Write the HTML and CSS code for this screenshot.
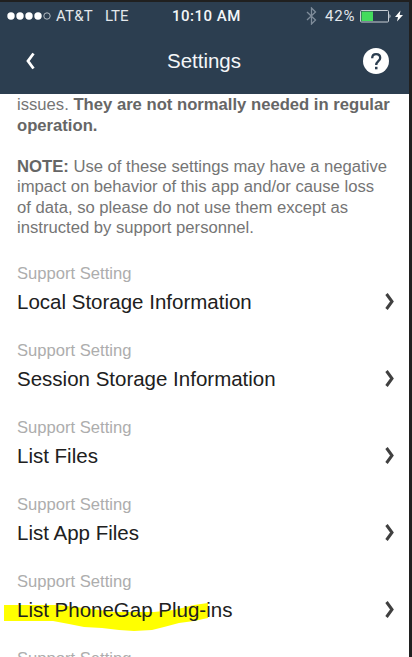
FILE: index.html
```html
<!DOCTYPE html>
<html lang="en">
<head>
<meta charset="utf-8">
<title>Settings</title>
<link rel="stylesheet" href="styles.css">
</head>
<body>
<div class="phone">
  <header class="header">
    <div class="status">
      <div class="carrier">
        <svg class="signal" width="44" height="8" viewBox="0 0 44 8"><g fill="#fff"><circle cx="4" cy="4" r="3.7"/><circle cx="13" cy="4" r="3.7"/><circle cx="22" cy="4" r="3.7"/><circle cx="31" cy="4" r="3.7"/></g><circle cx="40" cy="4" r="3.2" fill="none" stroke="#d5dae0" stroke-width=".8"/></svg>
        <span class="network">AT&amp;T</span><span class="lte">LTE</span>
      </div>
      <span class="time">10:10 AM</span>
      <div class="power">
        <svg class="bluetooth" width="11" height="18" viewBox="0 0 11 18" fill="none" stroke="#7f8c9a" stroke-width="1.3"><path d="M1 5l8.5 8L5.5 17V1l4 4L1 13"/></svg>
        <span class="percent">42%</span>
        <svg class="battery" width="44" height="14" viewBox="0 0 44 14"><rect x=".5" y="1.5" width="28" height="11.5" rx="1" fill="none" stroke="#c8ced5"/><path d="M1.5 2.5H13v9.5H1.5z" fill="#43dc5c"/><path d="M29.5 5q2 2.2 0 4.5z" fill="#d5dae0"/><path d="M40.5 1.5L35 8h3l-1 4.5L43 6h-3.3z" fill="#fff"/></svg>
      </div>
    </div>
    <nav class="nav">
      <svg class="back" width="11" height="18" viewBox="0 0 11 18"><path d="M9.5 1.5L4 9 9.5 16.5" fill="none" stroke="#fff" stroke-width="2.8"/></svg>
      <h1 class="title">Settings</h1>
      <svg class="help" width="26" height="26" viewBox="0 0 26 26"><circle cx="13" cy="13" r="13" fill="#fff"/><path d="M9.2 10.2C9.2 7.5 10.6 6.2 13.1 6.2s4.1 1.5 4.1 3.7c0 3.1-4 3.3-4 7" fill="none" stroke="#2c3e50" stroke-width="2.3"/><path d="M12 18.8h2.5V21.3H12z" fill="#2c3e50"/></svg>
    </nav>
  </header>
  <main class="content">
    <p class="copy">issues. <b>They are not normally needed in regular<br>operation.</b></p>
    <p class="copy"><b>NOTE:</b> Use of these settings may have a negative<br>impact on behavior of this app and/or cause loss<br>of data, so please do not use them except as<br>instructed by support personnel.</p>
    <ul class="list">
      <li class="item"><span class="label">Support Setting</span><div class="row"><span>Local Storage Information</span><svg class="chevron" width="10" height="17" viewBox="0 0 10 17"><path d="M1.5 1L7 8.5 1.5 16"/></svg></div></li>
      <li class="item"><span class="label">Support Setting</span><div class="row"><span>Session Storage Information</span><svg class="chevron" width="10" height="17" viewBox="0 0 10 17"><path d="M1.5 1L7 8.5 1.5 16"/></svg></div></li>
      <li class="item"><span class="label">Support Setting</span><div class="row"><span>List Files</span><svg class="chevron" width="10" height="17" viewBox="0 0 10 17"><path d="M1.5 1L7 8.5 1.5 16"/></svg></div></li>
      <li class="item"><span class="label">Support Setting</span><div class="row"><span>List App Files</span><svg class="chevron" width="10" height="17" viewBox="0 0 10 17"><path d="M1.5 1L7 8.5 1.5 16"/></svg></div></li>
      <li class="item marked"><svg class="marker" width="206" height="30" viewBox="0 0 206 30"><path d="M0 3H54L80 6 110 10H150L170 8 190 3 204 1V16L190 19 175 21 160 25 148 28 130 29 115 28 98 26 80 25 65 22 49 19H0z" fill="#ff0"/></svg><span class="label">Support Setting</span><div class="row"><span>List PhoneGap Plug-ins</span><svg class="chevron" width="10" height="17" viewBox="0 0 10 17"><path d="M1.5 1L7 8.5 1.5 16"/></svg></div></li>
      <li class="item"><span class="label">Support Setting</span></li>
    </ul>
  </main>
</div>
</body>
</html>
```
FILE: styles.css
```css
* { box-sizing: border-box; }
body {
  margin: 0;
  height: 657px;
  overflow: hidden;
  background: #202020;
  font-family: "Liberation Sans", Arial, sans-serif;
}
svg { display: block; flex: none; }
.phone {
  width: 409px;
  height: 657px;
  padding-top: 2px;
  overflow: hidden;
  background: #fff;
  background-clip: content-box;
}
.header {
  height: 92px;
  background: #2c3e50;
  color: #f4f6f8;
}
.status {
  display: grid;
  grid-template-columns: 172px 1fr 104px;
  height: 27px;
  align-items: center;
  font-family: Roboto, sans-serif;
  font-size: 15px;
  line-height: 18px;
}
.carrier { display: flex; align-items: center; padding-left: 7px; color: #e3e7eb; }
.network { margin-left: 5px; letter-spacing: .2px; }
.lte { margin-left: 12px; }
.time { font-weight: 500; letter-spacing: .5px; }
.power { display: flex; align-items: center; padding-left: 1px; color: #e3e7eb; }
.percent { margin-left: 8px; width: 35px; letter-spacing: .8px; }
.nav {
  display: flex;
  align-items: center;
  justify-content: space-between;
  height: 65px;
  padding: 0 20px 0 24px;
}
.nav > * { position: relative; top: -1px; }
.title { margin: 0; padding-left: 10px; font-size: 20.5px; font-weight: 400; line-height: 24px; }
.content { padding: 1px 14px 0 17px; }
.copy {
  margin: 0 0 20.5px;
  color: #757575;
  font-size: 16.65px;
  line-height: 20.6px;
  white-space: nowrap;
}
.copy b { color: #666; }
.list { margin: 0; padding: 2px 0 0; list-style: none; }
.item { position: relative; height: 77px; }
.label {
  display: block;
  color: #adadad;
  font-size: 16.6px;
  line-height: 24px;
}
.row {
  display: flex;
  align-items: center;
  justify-content: space-between;
  position: relative;
  height: 32px;
  color: #202020;
  font-size: 20.5px;
  line-height: 32px;
}
.chevron { fill: none; stroke: #404040; stroke-width: 3; }
.marker { position: absolute; left: -13px; top: 32px; }
```
